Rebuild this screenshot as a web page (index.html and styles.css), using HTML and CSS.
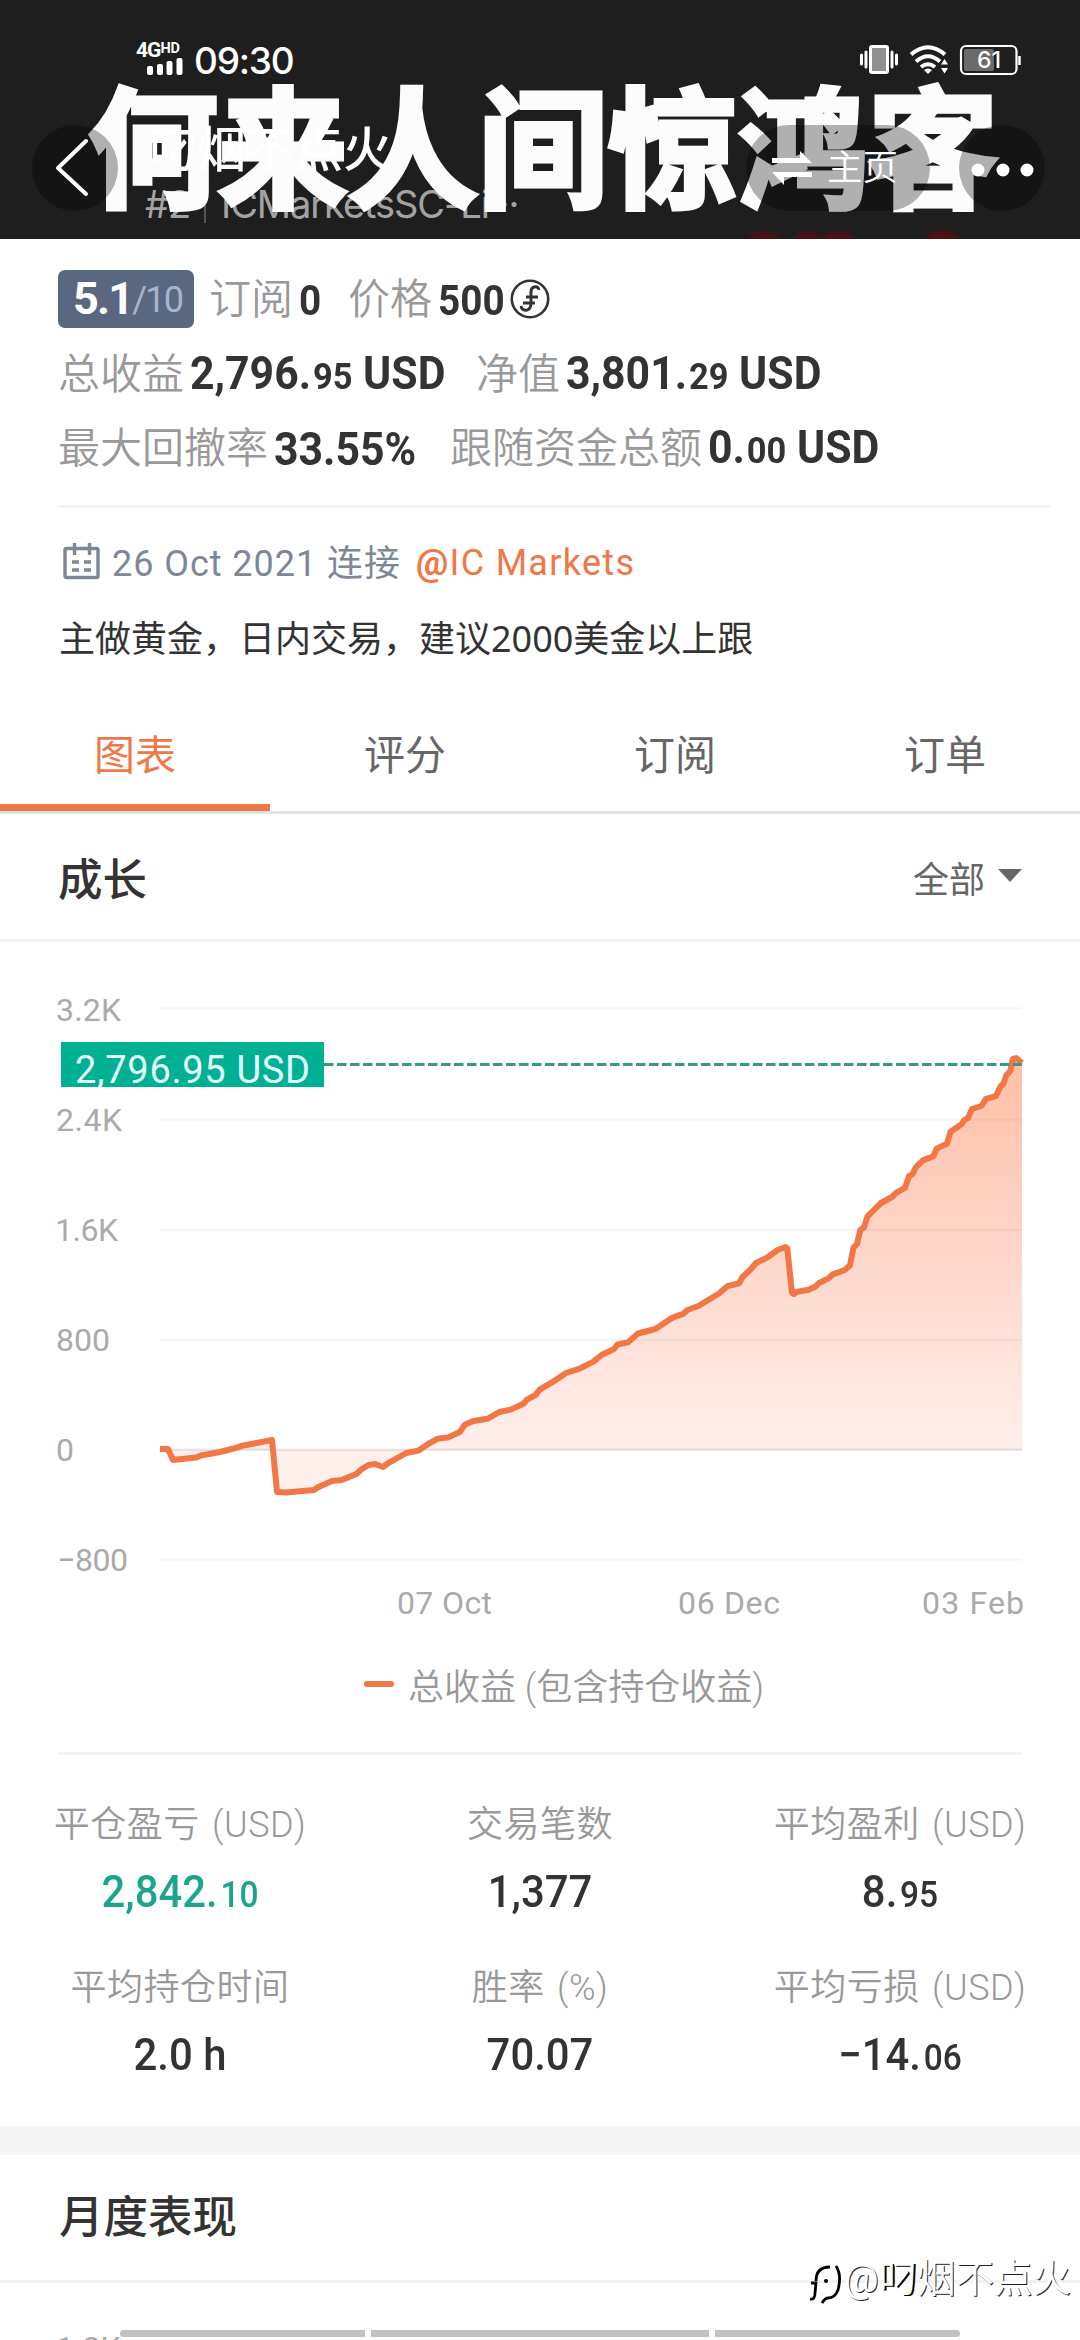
FILE: index.html
```html
<!DOCTYPE html>
<html lang="zh-CN">
<head>
<meta charset="utf-8">
<title>叼烟不点火</title>
<link rel="stylesheet" href="styles.css">
</head>
<body>
<header class="hero">
  <div class="banner">何来人间惊鸿客</div>
  <svg class="banner-marks" viewBox="0 0 220 10"><g fill="#650a0e"><ellipse cx="18" cy="10" rx="15" ry="6"/><ellipse cx="61" cy="10" rx="12" ry="6"/><ellipse cx="92" cy="10" rx="16" ry="6"/><ellipse cx="196" cy="10" rx="16" ry="7"/></g></svg>
  <div class="status">
    <div class="signal">
      <div class="net">4G<sup>HD</sup></div>
      <svg width="36" height="17" viewBox="0 0 36 17"><g fill="#fff"><rect x="0" y="8" width="6" height="9" rx="2"/><rect x="10" y="6" width="6" height="11" rx="2"/><rect x="19.500" y="3" width="6" height="14" rx="2"/><rect x="29.500" y="0" width="6" height="17" rx="2"/></g></svg>
    </div>
    <div class="clock">09:30</div>
    <svg class="sys" width="164" height="32" viewBox="0 0 164 32">
      <rect x="10.500" y="2.500" width="17" height="26" rx="1.500" fill="#8f8f8f" stroke="#fff" stroke-width="3"/>
      <path d="M1.500 11v9M6 8v15M32 8v15M36.500 11v9" stroke="#fff" stroke-width="3" stroke-linecap="round"/>
      <g fill="none" stroke="#fff" stroke-width="4"><path d="M51 10.500Q68 -4 85 10.500"/><path d="M56 17.500Q68 7 80 17.500"/><path d="M61 23Q68 17.500 75 23"/></g>
      <path d="M64 26q4-3 8 0l-4 4zM81 20.500l3.500-5.500 3.500 5.500zM81 24l3.500 5.500 3.500-5.500z" fill="#fff"/>
      <rect x="101" y="2" width="55.500" height="28" rx="5" fill="none" stroke="#fff" stroke-width="2.200"/>
      <rect x="104" y="5" width="30" height="22" rx="2" fill="#6b6b6b"/>
      <path d="M159.500 12v9" stroke="#fff" stroke-width="2.500"/>
      <text x="129" y="23.500" class="batt">61</text>
    </svg>
  </div>
  <div class="bar">
    <div class="round"><svg width="86" height="86" viewBox="0 0 86 86"><path d="M54 16L26 43L54 69" fill="none" stroke="#fff" stroke-width="4" stroke-linecap="round" stroke-linejoin="round"/></svg></div>
    <div class="who">
      <div class="name">叼烟不点火</div>
      <div class="sub">#2<i></i>ICMarketsSC-Li···</div>
    </div>
    <div class="home">
      <svg width="40" height="34" viewBox="0 0 40 34"><path d="M0 7h28V0l12 12H0zM0 21h40v5H12v8z" fill="#fff"/></svg>
      <span>主页</span>
    </div>
    <div class="round"><svg width="86" height="86" viewBox="0 0 86 86"><g fill="#fff"><circle cx="19" cy="45" r="6.500"/><circle cx="44" cy="45" r="6.500"/><circle cx="68" cy="45" r="6.500"/></g></svg></div>
  </div>
</header>

<section class="summary">
  <div class="line first">
    <span class="score"><b>5.1</b><em>/10</em></span>
    <span class="label">订阅</span><b class="num s subs">0</b>
    <span class="label">价格</span><b class="num s price">500</b>
    <svg class="coin" width="40" height="40" viewBox="0 0 40 40" fill="none" stroke="#333" stroke-width="2.600"><circle cx="20" cy="20" r="18.200"/><path d="M29 11q-1-4-5-3-3 1-3 5v11q0 6-4 7-5 1-6-4M16 18h12M13 24h12" stroke-width="2.900"/></svg>
  </div>
  <div class="line">
    <span class="label">总收益</span><b class="num profit">2,796.<small>95</small> <u>USD</u></b>
    <span class="label">净值</span><b class="num">3,801.<small>29</small> <u>USD</u></b>
  </div>
  <div class="line">
    <span class="label">最大回撤率</span><b class="num drawdown">33.55%</b>
    <span class="label">跟随资金总额</span><b class="num">0.<small>00</small> <u>USD</u></b>
  </div>
</section>

<section class="about">
  <div class="since">
    <svg width="38" height="38" viewBox="0 0 38 38" fill="none" stroke="#7d8797" stroke-width="3.400"><rect x="2" y="5.500" width="33" height="29" rx="1.500"/><path d="M11.500 0v12M26.500 0v12M9 19h7M21 19h7M9 27h7M21 27h7"/></svg>
    <span class="date">26 Oct 2021 连接</span><a><b>@</b>IC Markets</a>
  </div>
  <p>主做黄金，日内交易，建议2000美金以上跟</p>
</section>

<nav class="tabs"><a class="on">图表</a><a>评分</a><a>订阅</a><a>订单</a></nav>

<section class="growth">
  <div class="head"><h2>成长</h2><span class="range">全部<i></i></span></div>
  <svg class="chart" width="1080" height="690" viewBox="0 942 1080 690">
    <defs><linearGradient id="fade" gradientUnits="userSpaceOnUse" x1="0" y1="1058" x2="0" y2="1450"><stop offset="0" stop-color="#ffbfa8"/><stop offset=".55" stop-color="#fdd9cd"/><stop offset="1" stop-color="#feefeb"/></linearGradient></defs>
    <path d="M160 1449H168L173 1460L196 1457.500L201 1455.500L220 1452L239 1447L241 1446L272 1440L277 1492L286 1492.500L314 1490L318.500 1487L332 1481L341.600 1480L356.400 1474L360.500 1470L368.500 1465L375 1464L383 1467L387.400 1463.700L406.300 1453L418.400 1450.600L428.700 1443.700L437.300 1438.800L447.700 1437.600L459.700 1432L465 1424.500L473.500 1421L487.300 1418.800L499.300 1412L511.400 1409.400L523.400 1403.700L527 1399.600L535.500 1395L540 1389.400L552 1382.400L566 1373L579.600 1368.600L593.400 1361.600L602 1354.700L614 1349L617.500 1344.500L627.800 1342.400L638 1333.500L655.400 1329L672.600 1317.600L683 1313.900L687.400 1310L698.400 1306L719 1293.500L727.700 1286L739 1283.300L742.500 1277L750 1270L756 1263L767.300 1257.500L777.600 1250L785.500 1247L787.300 1248.600L792 1292.700L793.800 1294L796.500 1292L808.600 1289.800L815.500 1286.500L819 1283L828.600 1278.400L832.700 1274.300L844.800 1270L850 1265.300L853.400 1247.800L857 1244L860.300 1230L864 1227.300L867.500 1216.300L873.300 1210.600L881 1203L892 1197L896.400 1192.700L905 1187.800L909 1176.300L912.600 1173.900L916 1167L923 1160.400L933.300 1156.300L936.700 1148.600L947 1143.700L950.500 1131.800L961.800 1124L964 1120.400L968 1118L972 1109L981.500 1106L985.600 1099.200L996 1096L1000.400 1086.500L1003 1084.500L1006.300 1075.500L1010.400 1070.600L1012.800 1059.200L1016.200 1058L1022 1063V1450H160Z" fill="url(#fade)"/>
    <path d="M160 1008.500H1022M160 1119.500H1022M160 1230H1022M160 1340H1022M160 1559.500H1022" stroke="#000" stroke-opacity=".035" stroke-width="2.500"/>
    <path d="M160 1449.700H1022" stroke="#000" stroke-opacity=".09" stroke-width="2.500"/>
    <path d="M160 1449H168L173 1460L196 1457.500L201 1455.500L220 1452L239 1447L241 1446L272 1440L277 1492L286 1492.500L314 1490L318.500 1487L332 1481L341.600 1480L356.400 1474L360.500 1470L368.500 1465L375 1464L383 1467L387.400 1463.700L406.300 1453L418.400 1450.600L428.700 1443.700L437.300 1438.800L447.700 1437.600L459.700 1432L465 1424.500L473.500 1421L487.300 1418.800L499.300 1412L511.400 1409.400L523.400 1403.700L527 1399.600L535.500 1395L540 1389.400L552 1382.400L566 1373L579.600 1368.600L593.400 1361.600L602 1354.700L614 1349L617.500 1344.500L627.800 1342.400L638 1333.500L655.400 1329L672.600 1317.600L683 1313.900L687.400 1310L698.400 1306L719 1293.500L727.700 1286L739 1283.300L742.500 1277L750 1270L756 1263L767.300 1257.500L777.600 1250L785.500 1247L787.300 1248.600L792 1292.700L793.800 1294L796.500 1292L808.600 1289.800L815.500 1286.500L819 1283L828.600 1278.400L832.700 1274.300L844.800 1270L850 1265.300L853.400 1247.800L857 1244L860.300 1230L864 1227.300L867.500 1216.300L873.300 1210.600L881 1203L892 1197L896.400 1192.700L905 1187.800L909 1176.300L912.600 1173.900L916 1167L923 1160.400L933.300 1156.300L936.700 1148.600L947 1143.700L950.500 1131.800L961.800 1124L964 1120.400L968 1118L972 1109L981.500 1106L985.600 1099.200L996 1096L1000.400 1086.500L1003 1084.500L1006.300 1075.500L1010.400 1070.600L1012.800 1059.200L1016.200 1058L1022 1063" fill="none" stroke="#f17747" stroke-width="6" stroke-linejoin="round"/>
    <path d="M324 1064.500H1022" stroke="#369a83" stroke-width="3" stroke-dasharray="9.500 3.500"/>
    <rect x="61" y="1042" width="263" height="45" fill="#00b094"/>
    <text class="tag" x="75" y="1083" textLength="235">2,796.95 USD</text>
    <g class="axis">
      <text x="56" y="1020.500" textLength="65">3.2K</text><text x="56" y="1130.500" textLength="66">2.4K</text><text x="55" y="1241" textLength="63">1.6K</text><text x="56" y="1350.500">800</text><text x="56" y="1460.500">0</text><text x="57" y="1571" textLength="71">−800</text>
      <text x="397" y="1614" textLength="95">07 Oct</text><text x="678" y="1614" textLength="102">06 Dec</text><text x="922" y="1614" textLength="102">03 Feb</text>
    </g>
  </svg>
  <div class="legend"><i></i>总收益 (包含持仓收益)</div>
</section>

<section class="stats">
  <div><span>平仓盈亏 (USD)</span><strong class="up">2,842.<small>10</small></strong></div>
  <div><span>交易笔数</span><strong>1,377</strong></div>
  <div><span>平均盈利 (USD)</span><strong>8.<small>95</small></strong></div>
  <div><span>平均持仓时间</span><strong>2.0 h</strong></div>
  <div><span>胜率 (%)</span><strong>70.07</strong></div>
  <div><span>平均亏损 (USD)</span><strong>−14.<small>06</small></strong></div>
</section>

<section class="monthly">
  <h2>月度表现</h2>
  <div class="next">1.2K</div>
</section>
<div class="navbar"><i></i><i></i><i></i></div>
<div class="mark">
  <svg width="36" height="42" viewBox="0 0 36 42"><path d="M2 37q5 1 5-6l1-10H3M8 19q0-14 14-14M28 4q6 9 2 24-3 8-10 8-3 0-6 5" fill="none" stroke="#000" stroke-width="2.800"/><circle cx="18" cy="19" r="2"/></svg>
  <span>@<b>叼</b>烟不点火</span>
</div>
</body>
</html>
```

FILE: styles.css
```css
* { box-sizing: border-box; }
body {
  margin: 0; width: 1080px; height: 2340px; overflow: hidden; position: relative;
  background: #fff; color: #333;
  font-family: Roboto, "Noto Sans CJK SC", sans-serif;
}
svg { display: block; flex: none; }
b, em, i, u { font-style: normal; text-decoration: none; }

.hero { position: relative; height: 239px; background: #1e1e1e; overflow: hidden; color: #fff; }
.banner {
  position: absolute; left: 88px; top: 45px; white-space: nowrap;
  font: 700 130px/190px "Noto Sans CJK SC", sans-serif;
  color: #fcfcfc; -webkit-text-stroke: 5px #fcfcfc;
}
.banner-marks { position: absolute; left: 746px; top: 229px; width: 220px; height: 10px; filter: blur(2px); }
.status { position: relative; height: 125px; padding: 43px 56px 0 136px; display: flex; align-items: flex-start; }
.signal { width: 47px; height: 32px; display: flex; flex-direction: column; align-items: flex-end; }
.net { height: 15px; width: 47px; font: 700 21px/15px Roboto, sans-serif; letter-spacing: -1px; white-space: nowrap; display: flex; }
.net sup { font-size: 14.500px; line-height: 11px; letter-spacing: 0; }
.clock { margin-left: 11px; font: 500 37px/35px Inter, sans-serif; width: 110px; letter-spacing: -1.2px; }
.sys { margin: 1px 0 0 auto; }
.batt { font: 500 23px Inter, sans-serif; fill: #fff; text-anchor: middle; }
.bar { position: relative; height: 86px; padding: 0 35px 0 32px; display: flex; }
.round { width: 86px; height: 86px; border-radius: 50%; background: rgba(0,0,0,.3); flex: none; }
.who { width: 628px; padding-left: 27px; }
.name { font: 500 48.500px/42px "Noto Sans CJK SC", sans-serif; height: 58px; padding-left: 4px; }
.sub { font: 400 38px/42px Inter, sans-serif; letter-spacing: -1.1px; color: rgba(255,255,255,.62); display: flex; align-items: center; white-space: nowrap; }
.sub i { width: 2px; height: 32px; margin: 6px 15px 0 14px; background: rgba(255,255,255,.25); }
.home { width: 184px; height: 86px; border-radius: 43px; background: rgba(0,0,0,.3); display: flex; align-items: center; padding-left: 26px; gap: 15px; font: 350 35.500px/40px "Noto Sans CJK SC", sans-serif; margin-right: 29px; white-space: nowrap; }
.home span { margin-bottom: 6px; }

.summary { height: 266px; padding: 22px 0 0 58px; }
.line { height: 74px; display: flex; align-items: center; white-space: nowrap; }
.first { height: 76px; }
.label { flex: none; font-size: 42px; font-weight: 350; color: #999; font-family: "Noto Sans CJK SC", sans-serif; line-height: 60px; margin-bottom: 6px; }
.num { flex: none; font-size: 46px; line-height: 60px; margin-left: 6px; margin-right: -1px; transform: scaleX(.93); transform-origin: 0 50%; margin-top: 1px; }
.num small { font-size: 37px; margin-left: 2px; }
.num.s { font-size: 43px; transform: scaleX(.9); }
.subs { width: 50px; }
.price { width: 73px; }
.profit { width: 287px; }
.drawdown { width: 177px; }
.score { width: 136px; height: 58px; background: #5a6780; border-radius: 7px; color: #fff; line-height: 58px; padding-left: 15px; letter-spacing: -1.8px; display: flex; margin-right: 15px; }
.score b { font-size: 45px; }
.score em { font-size: 36px; color: #a9b4c8; line-height: 61px; }

.about { margin-left: 58px; height: 223px; border-top: 3px solid #f4f4f4; width: 992px; padding-top: 27px; }
.since { height: 56px; display: flex; align-items: center; padding-left: 5px; color: #7d8797; font-size: 36px; white-space: nowrap; }
.since svg { margin-bottom: 3px; }
.date { margin: 0 0 7px 11px; width: 304px; letter-spacing: .95px; }
.since a { color: #f17747; letter-spacing: 1.3px; }
.about p { margin: 20px 0 0 1px; font: 400 36px/56px "Noto Sans", "Noto Sans CJK SC", sans-serif; }

.tabs { height: 86px; display: grid; grid-template-columns: repeat(4, 1fr); border-bottom: 3px solid #e4e4e4; text-align: center; font-size: 41px; line-height: 56px; color: #666; }
.tabs a { height: 83px; }
.tabs .on { color: #f17747; border-bottom: 7px solid #f17747; }

.head { height: 128px; border-bottom: 3px solid #f2f2f2; padding: 0 58px; display: flex; justify-content: space-between; align-items: center; }
h2 { margin: 0; font-size: 44.500px; font-weight: 500; }
.range { display: flex; align-items: center; font-size: 36px; color: #666; }
.range i { margin: -3px 0 0 13px; border: 12px solid transparent; border-top: 13px solid #666; border-bottom: 0; }
.axis { font-size: 32px; fill: #aaa; }
.tag { font-size: 38px; fill: #e3fffb; }
.legend { height: 120px; display: flex; justify-content: center; align-items: center; font-size: 36px; color: #999; gap: 14px; padding: 0 0 16px 48px; font-weight: 350; }
.legend i { width: 30px; height: 6px; border-radius: 3px; background: #f17747; }

.stats { position: relative; height: 374px; padding-top: 47px; display: grid; grid-template-columns: repeat(3, 360px); grid-auto-rows: 163px; text-align: center; }
.stats::before { content: ""; position: absolute; left: 58px; right: 58px; top: 0; height: 3px; background: #f2f2f2; }
.stats div { display: flex; flex-direction: column; }
.stats span { font-size: 36px; line-height: 52px; color: #999; font-weight: 350; letter-spacing: .5px; word-spacing: 3px; }
.stats strong { font-size: 45px; line-height: 60px; margin-top: 11px; font-weight: 500; transform: scaleX(.93); }
.stats small { font-size: 36px; margin-left: 3px; }
.stats .up { color: #1aa58c; }

.monthly { height: 214px; overflow: hidden; border-top: 29px solid #f5f5f5; }
.monthly h2 { height: 125px; line-height: 127px; padding-left: 59px; }
.next { border-top: 3px solid #f2f2f2; font-size: 32px; color: #aaa; padding: 46px 0 0 56px; }
.navbar { position: absolute; left: 120px; top: 2330px; display: grid; grid-template-columns: 245px 338px 245px; gap: 6px; }
.navbar i { height: 7px; background: #c2c2c2; }
.navbar i:first-child { border-radius: 4px 0 0 4px; }
.navbar i:last-child { border-radius: 0 4px 4px 0; }
.mark { position: absolute; left: 808px; top: 2254px; display: flex; align-items: center; font-size: 38.500px; line-height: 44px; color: #fff; white-space: nowrap; text-shadow: 1px 1px 0 #222; }
.mark svg { margin-top: 8px; }
.mark b { font-weight: 400; text-shadow: 2px 1px 0 #000; }
```
